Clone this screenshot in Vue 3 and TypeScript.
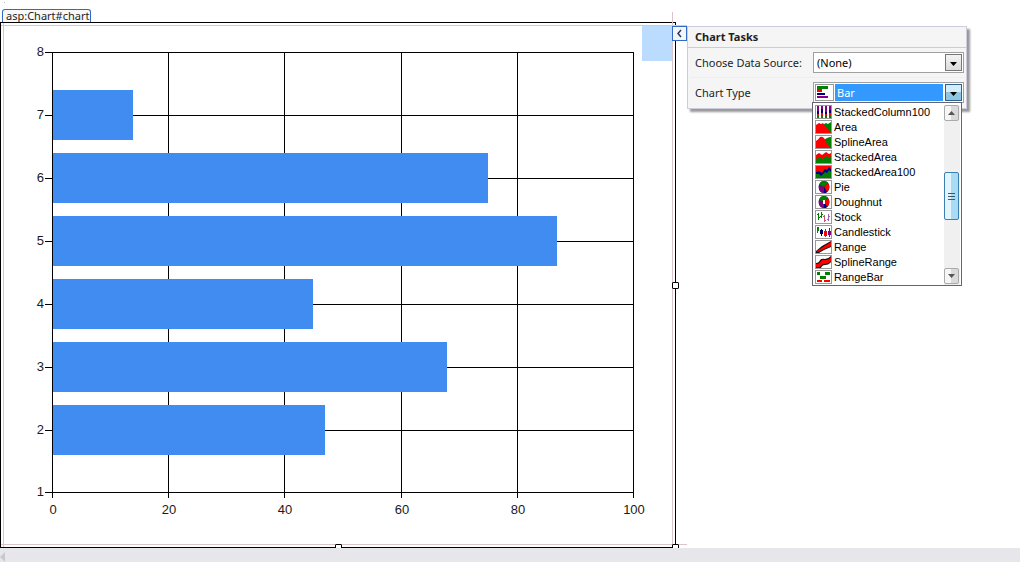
<script setup lang="ts">
import { ref } from 'vue'

interface Bar { category: number; value: number }
interface Shape { d: string; fill: string }
interface ChartKind { name: string; shapes: Shape[] }

const bars: Bar[] = [
  { category: 7, value: 14 },
  { category: 6, value: 75 },
  { category: 5, value: 87 },
  { category: 4, value: 45 },
  { category: 3, value: 68 },
  { category: 2, value: 47 },
]
const xTicks = [0, 20, 40, 60, 80, 100]
const yTicks = [1, 2, 3, 4, 5, 6, 7, 8]

const plot = { left: 51, top: 29, width: 581, height: 440 }
const x = (v: number) => Math.round(plot.left + (v * plot.width) / 100)
const y = (v: number) => plot.top + Math.ceil(((8 - v) * plot.height) / 7)

const green = '#008000'
const red = '#ff0000'
const navy = '#000080'
const purple = '#800080'

const pie: Shape[] = [
  { d: 'M8 0C5 0 4 2 3 4L8 6L12 2C11 1 10 0 8 0Z', fill: green },
  { d: 'M12 2L8 6L11 11C14 9 14 4 12 2Z', fill: red },
  { d: 'M8 6L11 11C10 12 9 12 8 12Z', fill: navy },
  { d: 'M3 4L8 6V12C4 12 2 8 3 4Z', fill: purple },
]
const outline: Shape = {
  d: 'M8 0C1 0 1 12 8 12S15 0 8 0Z',
  fill: '#101010',
}

const kinds: ChartKind[] = [
  {
    name: 'StackedColumn100',
    shapes: [
      { d: 'M1 0H3V5H1ZM5 0H7V3H5ZM9 0H11V6H9ZM13 0H15V4H13Z', fill: purple },
      { d: 'M1 5H3V8H1ZM5 3H7V7H5ZM9 6H11V8H9ZM13 4H15V7H13Z', fill: navy },
      { d: 'M1 8H3V10H1ZM5 7H7V10H5ZM9 8H11V10H9ZM13 7H15V9H13Z', fill: red },
      { d: 'M1 10H3V12H1ZM5 10H7V12H5ZM9 10H11V12H9ZM13 9H15V12H13Z', fill: green },
    ],
  },
  {
    name: 'Area',
    shapes: [
      { d: 'M5 5L10 2L12 3L15 1V12H5Z', fill: green },
      { d: 'M0 4L3 2L5 3L7 2L10 6L15 12H0Z', fill: red },
    ],
  },
  {
    name: 'SplineArea',
    shapes: [
      { d: 'M7 5Q11 1 15 1V12H7Z', fill: green },
      { d: 'M0 5Q3 3 4 1Q6 0 8 2Q10 5 11 8L15 12H0Z', fill: red },
    ],
  },
  {
    name: 'StackedArea',
    shapes: [
      { d: 'M0 4L3 2L6 4L10 1L13 3L15 2V12H0Z', fill: red },
      { d: 'M0 8L3 6L7 8L10 5L13 7L15 5V12H0Z', fill: green },
    ],
  },
  {
    name: 'StackedArea100',
    shapes: [
      { d: 'M0 0H15V12H0Z', fill: red },
      { d: 'M0 6L3 5L6 7L9 3L11 4L13 1L15 3V12H0Z', fill: navy },
      { d: 'M0 8L3 8L5 10L9 6L11 7L13 4L15 6V12H0Z', fill: green },
    ],
  },
  { name: 'Pie', shapes: [outline, ...pie] },
  { name: 'Doughnut', shapes: [outline, ...pie, { d: 'M7 4H9V8H7Z', fill: '#fff' }] },
  {
    name: 'Stock',
    shapes: [
      { d: 'M2 2H3V9H2ZM1 3H2V4H1ZM3 6H4V7H3Z', fill: green },
      { d: 'M5 1H6V7H5ZM4 5H5V6H4ZM6 3H7V4H6Z', fill: green },
      { d: 'M8 4H9V11H8ZM7 5H8V6H7ZM9 9H10V10H9Z', fill: '#d05070' },
      { d: 'M12 3H13V10H12ZM11 8H12V9H11ZM13 5H14V6H13Z', fill: '#a060b0' },
    ],
  },
  {
    name: 'Candlestick',
    shapes: [
      { d: 'M1 1H3V5H2V7H1Z', fill: green },
      { d: 'M5 3H6V4H7V8H6V10H5V8H4V4H5Z', fill: '#000060' },
      { d: 'M9 3H10V5H11V10H10V11H9V10H8V5H9Z', fill: red },
      { d: 'M13 2H14V5H15V9H14V11H13V9H12V5H13Z', fill: purple },
    ],
  },
  {
    name: 'Range',
    shapes: [
      { d: 'M0 10L6 5L15 0V6L8 9L3 12H0Z', fill: '#181010' },
      { d: 'M1 10L7 6L15 1V5L8 8L2 11H1Z', fill: red },
    ],
  },
  {
    name: 'SplineRange',
    shapes: [
      { d: 'M0 7Q3 7 4 4Q6 2 9 3Q12 3 15 0V6Q13 9 9 9Q6 9 5 12H0Z', fill: '#181010' },
      { d: 'M0 8Q4 8 5 5Q7 3 9 4Q13 4 15 1V5Q12 8 9 8Q5 8 4 11H0Z', fill: red },
    ],
  },
  {
    name: 'RangeBar',
    shapes: [
      { d: 'M1 1H4V4H1ZM9 1H14V4H9ZM4 5H10V8H4Z', fill: green },
      { d: 'M1 9H6V11H1ZM8 9H14V11H8Z', fill: red },
    ],
  },
]

const dataSource = ref('(None)')
const chartType = ref('Bar')
const listOpen = ref(true)

function choose(name: string) {
  chartType.value = name
  listOpen.value = false
}
</script>

<template>
  <main class="designer">
    <header class="tag-row">
      <span class="tag">asp:Chart#chart</span>
    </header>

    <div class="stage">
      <section class="frame">
        <svg class="chart" viewBox="0 0 674 524" role="img" aria-label="Bar chart">
          <g class="grid">
            <rect v-for="t in xTicks" :key="'x' + t" :x="x(t)" :y="plot.top" width="1" :height="plot.height + 6" />
            <rect v-for="t in yTicks" :key="'y' + t" :x="plot.left - 7" :y="y(t)" :width="plot.width + 8" height="1" />
          </g>
          <g class="bars">
            <rect
              v-for="b in bars"
              :key="b.category"
              :x="plot.left + 1"
              :y="y(b.category) - 25"
              :width="x(b.value) - plot.left - 1"
              height="50"
            />
          </g>
          <text v-for="t in yTicks" :key="'yl' + t" :x="plot.left - 8" :y="y(t) + 4" text-anchor="end">{{ t }}</text>
          <text v-for="t in xTicks" :key="'xl' + t" :x="x(t) + 1" :y="plot.top + plot.height + 22" text-anchor="middle">{{ t }}</text>
        </svg>
        <span class="corner"></span>
        <span class="guide guide-top"></span>
        <span class="guide guide-bottom"></span>
        <span class="guide guide-left"></span>
        <span class="guide guide-right"></span>
        <span class="handle handle-right"></span>
        <span class="handle handle-bottom"></span>
        <span class="handle handle-corner"></span>
        <button class="smart-tag" type="button" aria-label="Chart Tasks">
          <svg viewBox="0 0 13 13"><path d="M8 3L5 6.500L8 10" /></svg>
        </button>
      </section>

      <aside class="side">
        <section class="tasks">
          <h2>Chart Tasks</h2>
          <div class="field">
            <label for="source">Choose Data Source:</label>
            <div class="combo">
              <select id="source" v-model="dataSource">
                <option>(None)</option>
              </select>
              <span class="drop"><svg viewBox="0 0 15 15"><path d="M4 7H11L7.500 11Z" /></svg></span>
            </div>
          </div>
          <div class="field">
            <label for="type">Chart Type</label>
            <div class="combo">
              <svg class="icon current" viewBox="0 0 17 15" aria-hidden="true">
                <path d="M1 1H12V4H1Z" fill="#008000" />
                <path d="M1 4H6V7H1Z" fill="#ff0000" />
                <path d="M1 8H9V10H1Z" fill="#000080" />
                <path d="M1 11H12V13H1Z" fill="#800080" />
              </svg>
              <select id="type" v-model="chartType" class="selected">
                <option>Bar</option>
                <option v-for="k in kinds" :key="k.name">{{ k.name }}</option>
              </select>
              <button class="drop hot" type="button" aria-label="Show chart types" @click="listOpen = !listOpen">
                <svg viewBox="0 0 15 15"><path d="M4 7H11L7.500 11Z" /></svg>
              </button>
              <div v-if="listOpen" class="popup">
                <ul role="listbox" aria-label="Chart types">
                  <li v-for="k in kinds" :key="k.name" role="option" @click="choose(k.name)">
                    <svg class="icon" viewBox="0 0 15 12" aria-hidden="true">
                      <path v-for="(s, i) in k.shapes" :key="i" :d="s.d" :fill="s.fill" />
                    </svg>
                    <span>{{ k.name }}</span>
                  </li>
                </ul>
                <div class="scroll">
                  <button type="button" aria-label="Scroll up"><svg viewBox="0 0 13 14"><path d="M3 9H10L6.500 5Z" /></svg></button>
                  <span class="gap-above"></span>
                  <span class="thumb"><i></i><i></i><i></i></span>
                  <span class="gap-below"></span>
                  <button type="button" aria-label="Scroll down"><svg viewBox="0 0 13 14"><path d="M3 5H10L6.500 9Z" /></svg></button>
                </div>
              </div>
            </div>
          </div>
        </section>
      </aside>
    </div>

    <footer class="hscroll">
      <svg viewBox="0 0 5 10"><path d="M5 0V10L0 5Z" /></svg>
    </footer>
  </main>
</template>

<style>
body {
  margin: 0;
  background: #fff;
}
</style>

<style scoped>
* {
  box-sizing: border-box;
}
.designer {
  display: flex;
  flex-direction: column;
  min-height: 100vh;
  overflow: hidden;
  color: #1e1e1e;
  font: 11px/15px "Noto Sans", "Open Sans", sans-serif;
}
.tag-row {
  display: flex;
  align-items: flex-end;
  height: 22px;
  padding-left: 2px;
  background: linear-gradient(#bbb 1px, transparent 1px) 4px 2px / 1px 4px no-repeat;
}
.tag {
  height: 13px;
  padding: 0 1px 0 3px;
  border: 1px solid #316ac5;
  border-bottom: 0;
  border-radius: 3px 3px 0 0;
  background: #f8f8f8;
  font: 11px/12px "Noto Sans", sans-serif;
}
.stage {
  display: flex;
  align-items: flex-start;
}
.frame {
  position: relative;
  flex: 1;
  min-width: 0;
  border: 1px solid #000;
}
.chart {
  display: block;
  width: 100%;
  height: auto;
  font: 13px "Liberation Sans", sans-serif;
  fill: #1a1a1a;
}
.grid {
  fill: #000;
  shape-rendering: crispEdges;
}
.bars {
  fill: #418cf0;
  shape-rendering: crispEdges;
}
.corner {
  position: absolute;
  top: 3px;
  right: 3px;
  width: 30px;
  height: 35px;
  background: #bbdcff;
}
.guide {
  position: absolute;
  background: #dcc5c9;
}
.guide-top,
.guide-bottom {
  left: 0;
  right: -12px;
  height: 1px;
}
.guide-top {
  top: 2px;
}
.guide-bottom {
  bottom: 2px;
}
.guide-left,
.guide-right {
  bottom: 0;
  width: 1px;
}
.guide-left {
  top: 0;
  left: 2px;
}
.guide-right {
  top: -11px;
  right: 2px;
}
.handle {
  position: absolute;
  width: 7px;
  height: 7px;
  border: 1px solid #000;
  border-radius: 1px;
  background: #fff;
}
.handle-right {
  top: 50%;
  right: -4px;
  margin-top: -3px;
}
.handle-bottom {
  bottom: -4px;
  left: 50%;
  margin-left: -3px;
}
.handle-corner {
  right: -4px;
  bottom: -4px;
}
.smart-tag {
  position: absolute;
  top: 3px;
  right: -12px;
  width: 15px;
  height: 15px;
  padding: 0;
  border: 1px solid #316ac5;
  background: #f3f5fa;
}
.smart-tag svg {
  display: block;
  width: 13px;
  height: 13px;
  fill: none;
  stroke: #223a60;
  stroke-width: 1.5;
}
.side {
  flex: 0 0 344px;
  padding: 4px 53px 0 11px;
}
.tasks {
  padding-bottom: 1px;
  border: 1px solid #ccccdc;
  background: #f5f5f5;
  box-shadow: 3px 3px 2px #999;
}
h2 {
  height: 21px;
  margin: 0;
  padding-left: 7px;
  border-bottom: 1px solid #ccccdc;
  font: 700 11px/20px "Noto Sans", sans-serif;
}
.field {
  display: flex;
  align-items: center;
  height: 29px;
  margin: 0 2px;
  padding-left: 5px;
}
.field + .field {
  height: 30px;
  border-top: 1px solid #eee;
}
label {
  flex: 1;
  white-space: nowrap;
}
.combo {
  position: relative;
  display: flex;
  align-items: center;
  width: 151px;
  height: 21px;
  padding: 1px;
  border: 1px solid #a0a0a0;
  background: #fff;
}
select {
  flex: 1;
  min-width: 0;
  height: 17px;
  padding: 0 2px;
  border: 0;
  outline: 0;
  appearance: none;
  background: #fff;
  color: #000;
  font: 11px/15px "Noto Sans", sans-serif;
}
select.selected {
  margin: 0 2px 0 1px;
  background: #3399ff;
  color: #fff;
}
.drop {
  flex: none;
  width: 17px;
  height: 17px;
  padding: 0;
  border: 1px solid #777;
  background: linear-gradient(#f4f4f4, #dcdcdc);
}
.drop.hot {
  border-color: #2c628b;
  background: linear-gradient(#d5edf9 50%, #8fc7e2 50%);
}
.drop svg {
  display: block;
  width: 15px;
  height: 15px;
}
.icon {
  flex: none;
  width: 17px;
  height: 14px;
  border: 1px solid #999;
  background: #fff;
}
.icon.current {
  width: 19px;
  height: 17px;
}
.popup {
  position: absolute;
  z-index: 2;
  top: 19px;
  left: -2px;
  display: flex;
  width: 150px;
  padding: 2px 1px 0;
  border: 1px solid #646473;
  background: #fff;
}
ul {
  flex: 1;
  margin: 0;
  padding: 0 0 0 1px;
  list-style: none;
}
li {
  display: flex;
  align-items: flex-start;
  gap: 2px;
  height: 15px;
  color: #000;
  font: 11px/15px "Liberation Sans", sans-serif;
}
.scroll {
  display: flex;
  flex-direction: column;
  width: 16px;
  padding: 0 1px 1px 0;
  background: #f0f0f0;
}
.scroll button {
  height: 16px;
  padding: 0;
  border: 1px solid #aaa;
  border-radius: 2px;
  background: linear-gradient(90deg, #f6f6f6 50%, #dadada 50%);
}
.scroll svg {
  display: block;
  width: 13px;
  height: 14px;
  fill: #555;
}
.gap-above {
  flex: 51;
}
.gap-below {
  flex: 48;
}
.thumb {
  display: flex;
  flex-direction: column;
  align-items: center;
  justify-content: center;
  gap: 2px;
  height: 48px;
  border: 1px solid #3c7fb1;
  border-radius: 2px;
  background: linear-gradient(90deg, #e3f4fc 45%, #a9dbf5 45%);
}
.thumb i {
  width: 7px;
  height: 1px;
  background: #345a75;
}
.hscroll {
  position: relative;
  z-index: 1;
  display: flex;
  flex: 1 0 14px;
  align-items: flex-start;
  padding-top: 4px;
  background: #e6e6eb;
}
.hscroll svg {
  width: 5px;
  height: 10px;
  fill: #c8c8d0;
}
</style>
